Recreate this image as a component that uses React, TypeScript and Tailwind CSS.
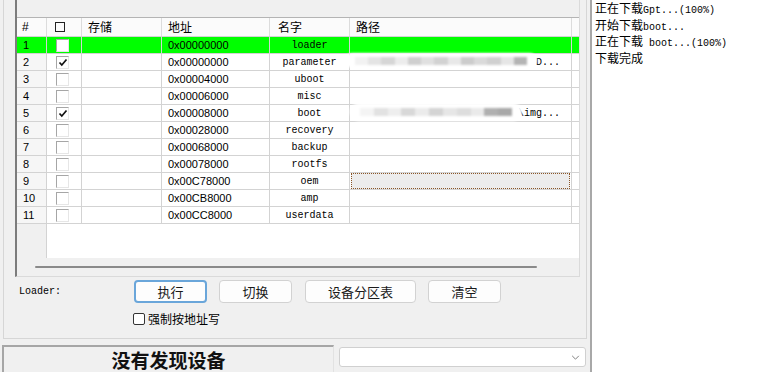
import React from "react";
import clsx from "clsx";

type RowData = { n: number; addr: string; name: string; checked?: boolean; path?: string };

const rows: RowData[] = [
  { n: 1, addr: "0x00000000", name: "loader" },
  { n: 2, addr: "0x00000000", name: "parameter", checked: true, path: "D..." },
  { n: 3, addr: "0x00004000", name: "uboot" },
  { n: 4, addr: "0x00006000", name: "misc" },
  { n: 5, addr: "0x00008000", name: "boot", checked: true, path: "\\img..." },
  { n: 6, addr: "0x00028000", name: "recovery" },
  { n: 7, addr: "0x00068000", name: "backup" },
  { n: 8, addr: "0x00078000", name: "rootfs" },
  { n: 9, addr: "0x00C78000", name: "oem" },
  { n: 10, addr: "0x00CB8000", name: "amp" },
  { n: 11, addr: "0x00CC8000", name: "userdata" },
];

const smudge2 = ["#f2f2f2", "#e4e4e4", "#d6d6d6", "#ececec", "#cfcfcf", "#e0e0e0", "#d2d2d2", "#e8e8e8", "#cccccc", "#dadada", "#d0d0d0", "#e6e6e6", "#b4b4b4"];
const smudge5 = ["#f4f4f4", "#e2e2e2", "#eeeeee", "#d8d8d8", "#ebebeb", "#d4d4d4", "#e6e6e6", "#dddddd", "#eaeaea", "#b0b0b0", "#a8a8a8"];

// windows-style sunken checkbox
function CellCheck({ checked }: { checked?: boolean }) {
  return (
    <div className="relative h-[13px] w-[13px] border-t border-l border-[#a6a6a6] border-r-[#e6e6e6] border-b-[#e6e6e6] border-r border-b bg-white">
      {checked && (
        <svg viewBox="0 0 10 9" className="absolute left-[1px] top-[1px] h-[9px] w-[10px]">
          <path d="M1.5 4.5 L3.8 7 L8.5 1.5" fill="none" stroke="#111" strokeWidth="1.7" />
        </svg>
      )}
    </div>
  );
}

function Smudge({ blocks, className }: { blocks: string[]; className: string }) {
  return (
    <div className={clsx("absolute flex items-center rounded-full bg-white px-[10px] blur-[1px]", className)}>
      {blocks.map((g, i) => (
        <span key={i} className="h-[8px] flex-1" style={{ background: g }} />
      ))}
    </div>
  );
}

function GridRow({ r }: { r: RowData }) {
  const green = r.n === 1;
  return (
    <div className={clsx("flex h-[17px] border-b border-[#d3d3d3] text-black", green ? "bg-[#00ff00]" : "bg-white")}>
      <div
        className={clsx(
          "w-[30px] border-r border-[#d3d3d3] pl-[6px] font-['Liberation_Sans',sans-serif] text-[11px] leading-[17px]",
          !green && "bg-[#f6f6f6]"
        )}
      >
        {r.n}
      </div>
      <div className="flex w-[35px] items-center border-r border-[#d3d3d3] pl-[9px]">
        <CellCheck checked={r.checked} />
      </div>
      <div className="w-[80px] border-r border-[#d3d3d3]" />
      <div className="w-[108px] border-r border-[#d3d3d3] pl-[6px] font-['Liberation_Sans',sans-serif] text-[11px] leading-[17px]">
        {r.addr}
      </div>
      <div className="w-[80px] border-r border-[#d3d3d3] text-center font-['Liberation_Mono',monospace] text-[10px] leading-[17px]">
        {r.name}
      </div>
      <div className="relative w-[222px] border-r border-[#d3d3d3]">
        {r.n === 9 && (
          <div className="absolute inset-x-[1px] inset-y-0 border border-dotted border-[#8a5526] bg-[#ececec]" />
        )}
        {r.path && (
          <div className="pr-[11px] text-right font-['Liberation_Mono',monospace] text-[10px] leading-[17px]">{r.path}</div>
        )}
        {r.n === 2 && <Smudge blocks={smudge2} className="left-[-5px] top-[-1px] h-[15px] w-[192px]" />}
        {r.n === 5 && <Smudge blocks={smudge5} className="left-[0px] top-[-2px] h-[18px] w-[172px]" />}
      </div>
      <div className="flex-1" />
    </div>
  );
}

function Btn({ className, focus, children }: { className: string; focus?: boolean; children: React.ReactNode }) {
  return (
    <div
      className={clsx(
        "flex h-[23px] items-center justify-center rounded-[4px] bg-[#fdfdfd] text-[13px] text-[#1a1a1a]",
        focus ? "border-2 border-[#6aa6da]" : "border border-[#d2d2d2]",
        className
      )}
    >
      {children}
    </div>
  );
}

// CJK at 12px, latin in a narrow mono like SimSun half-width glyphs
function Mixed({ text }: { text: string }) {
  const parts = text.split(/([\u4e00-\u9fff]+)/).filter(Boolean);
  return (
    <>
      {parts.map((p, i) =>
        /[\u4e00-\u9fff]/.test(p) ? (
          <span key={i} className="text-[12px]">{p}</span>
        ) : (
          <span key={i} className="whitespace-pre font-['Liberation_Mono',monospace] text-[10px]">{p}</span>
        )
      )}
    </>
  );
}

const logLines = ["正在下载Gpt...(100%)", "开始下载boot...", "正在下载 boot...(100%)", "下载完成"];

export default function App() {
  return (
    <div className="flex h-[372px] w-[765px] overflow-hidden bg-[#f0f0f0] font-['Noto_Sans_CJK_SC','Noto_Sans',sans-serif] text-black">
      {/* left side */}
      <div className="flex w-[590px] flex-col">
        <div className="ml-[3px] h-[339px] w-[584px] border-x border-b border-[#d6d6d6]">
          {/* partition grid */}
          <div className="ml-[11px] flex h-[277px] w-[565px] flex-col border-l-2 border-r border-b border-l-[#7c7c7c] border-r-[#dadada] border-b-[#dadada]">
            <div className="h-[18px] border-b border-[#b4b4b4] bg-[#f0f0f0]" />
            <div className="flex h-[19px] border-b border-[#d3d3d3] bg-[#fbfbfb] text-[12px] leading-[18px]">
              <div className="w-[30px] border-r border-[#dcdcdc] pl-[5px] font-['Liberation_Sans',sans-serif]">#</div>
              <div className="flex w-[35px] items-center border-r border-[#dcdcdc] pl-[8px]">
                <div className="h-[10px] w-[10px] border-[1.5px] border-[#222]" />
              </div>
              <div className="w-[80px] border-r border-[#dcdcdc] pl-[6px]">存储</div>
              <div className="w-[108px] border-r border-[#dcdcdc] pl-[6px]">地址</div>
              <div className="w-[80px] border-r border-[#dcdcdc] pl-[8px]">名字</div>
              <div className="w-[222px] border-r border-[#dcdcdc] pl-[6px]">路径</div>
              <div className="flex-1" />
            </div>
            {rows.map((r) => (
              <GridRow key={r.n} r={r} />
            ))}
            <div className="flex h-[34px]">
              <div className="w-[30px] border-r border-[#d3d3d3] bg-[#f0f0f0]" />
              <div className="flex-1 bg-white" />
            </div>
            <div className="h-[18px] bg-[#f0f0f0] pt-[8px]">
              <div className="ml-[18px] h-[2px] w-[502px] rounded-full bg-[#8a8a8a]" />
            </div>
          </div>

          {/* actions */}
          <div className="mt-[3px] flex items-center">
            <div className="ml-[15px] w-[115px] font-['Liberation_Mono',monospace] text-[10px]">Loader:</div>
            <Btn className="w-[73px]" focus>执行</Btn>
            <Btn className="ml-[12px] w-[73px]">切换</Btn>
            <Btn className="ml-[13px] w-[111px]">设备分区表</Btn>
            <Btn className="ml-[12px] w-[73px]">清空</Btn>
          </div>
          <div className="ml-[129px] mt-[9px] flex h-[14px] items-center gap-[3px] text-[12px]">
            <div className="h-[12px] w-[12px] rounded-[2px] border border-[#333] bg-white" />
            <span>强制按地址写</span>
          </div>
        </div>

        {/* status + port select */}
        <div className="mt-[6px] flex h-[27px]">
          <div className="ml-[2px] w-[332px] border-t-2 border-l-2 border-r border-t-[#a6a6a6] border-l-[#a6a6a6] border-r-[#e2e2e2] text-center text-[19px] font-bold leading-[26px] text-[#111]">
            没有发现设备
          </div>
          <div className="relative ml-[5px] mt-[2px] h-[20px] w-[247px] rounded-[3px] border border-[#d0d0d0] bg-white">
            <svg viewBox="0 0 10 6" className="absolute right-[5px] top-[7px] h-[5px] w-[9px]">
              <path d="M1 1 L5 5 L9 1" fill="none" stroke="#808080" strokeWidth="1.2" />
            </svg>
          </div>
        </div>
      </div>

      {/* log */}
      <div className="flex-1 overflow-hidden border-l-2 border-[#a8a8a8] bg-white pl-[3px]">
        <div className="-mt-[2px]">
          {logLines.map((l) => (
            <div key={l} className="h-[16.5px] whitespace-nowrap leading-[16.5px]">
              <Mixed text={l} />
            </div>
          ))}
        </div>
      </div>
    </div>
  );
}
